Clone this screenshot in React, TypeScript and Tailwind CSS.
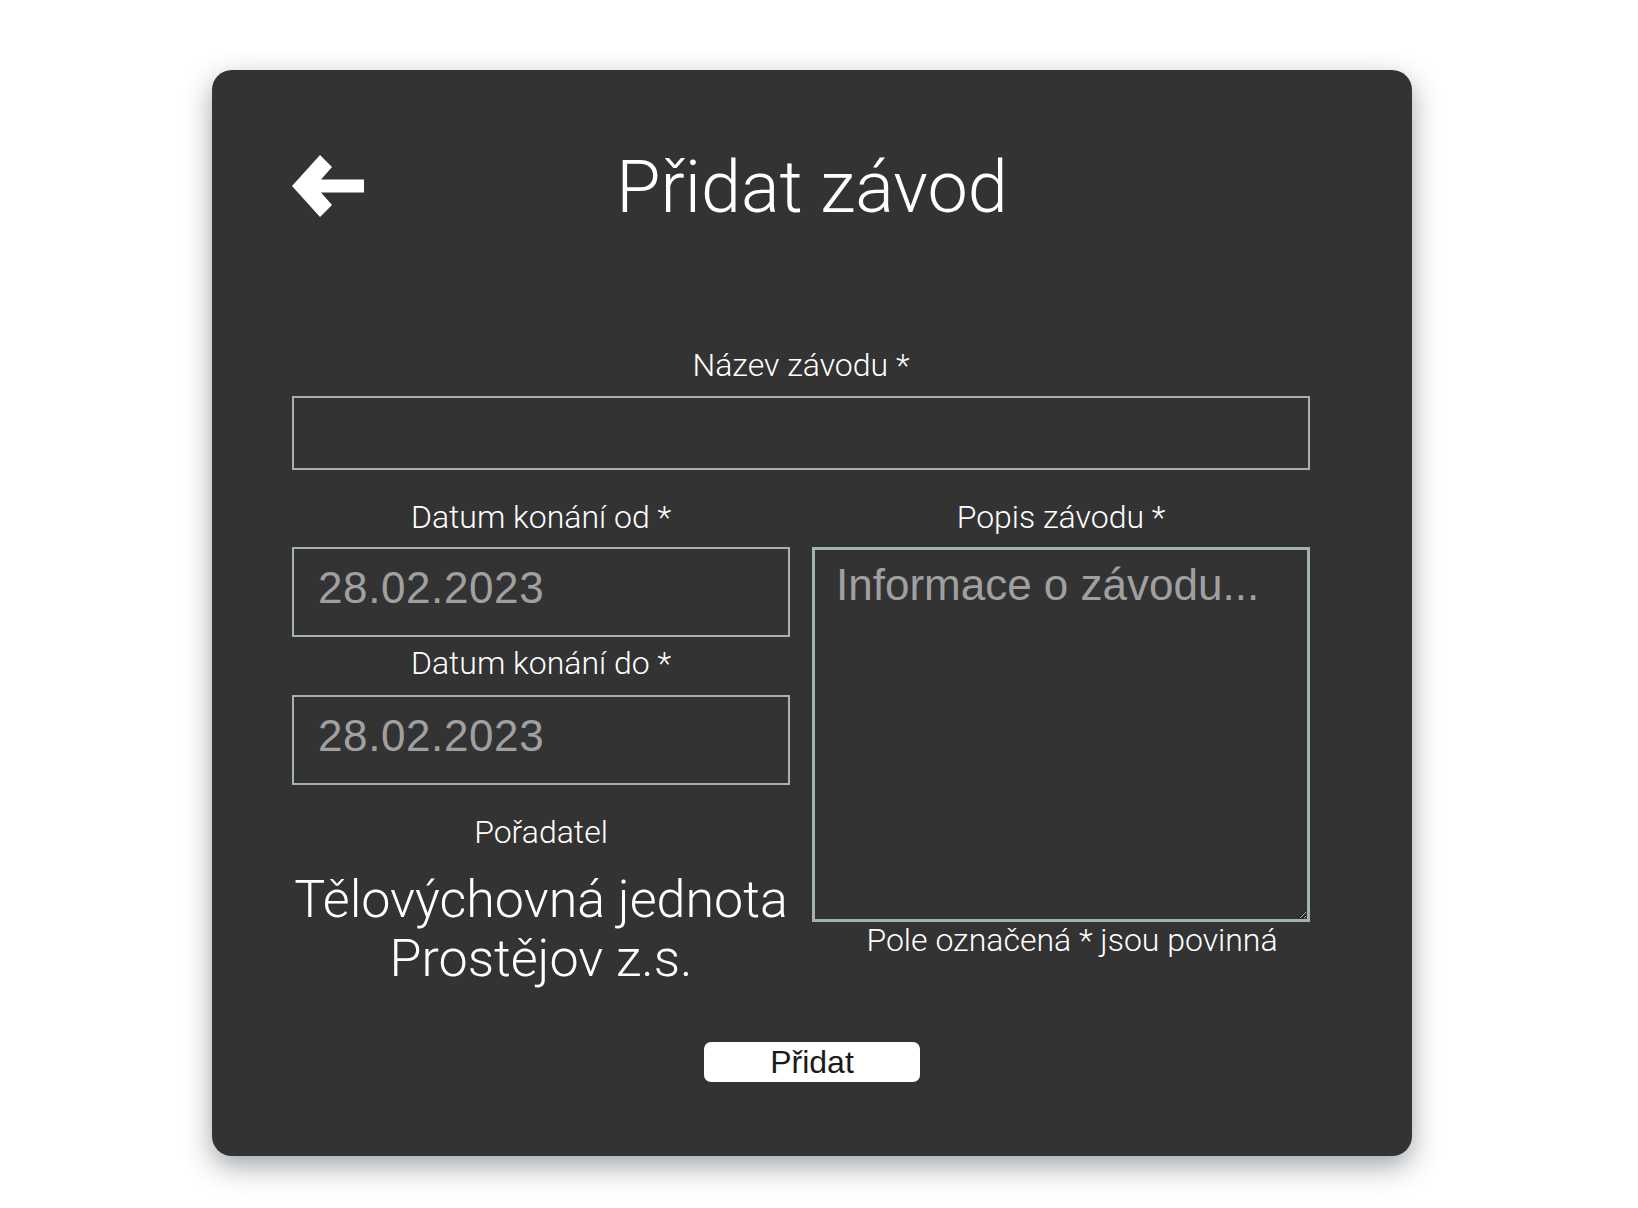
import React from "react";

function BackArrow() {
    return (
        <svg width="72" height="62" viewBox="0 0 72 62" className="block">
            <polygon
                points="0,31 28,0 40,12 29,24.5 72,24.5 72,37.5 29,37.5 40,50 28,62"
                fill="#ffffff"
            />
        </svg>
    );
}

function Label({ children }: { children: React.ReactNode }) {
    return (
        <div className="text-center text-white font-['Roboto',sans-serif] font-light text-[32px] leading-[37.5px]">
            {children}
        </div>
    );
}

export default function App() {
    return (
        <div className="min-h-screen bg-white pl-[212px] pt-[70px] pb-[53px]">
            <div className="w-[1200px] rounded-[20px] bg-[#333333] px-[80px] pt-[76px] pb-[74px] shadow-[0_10px_28px_rgba(45,55,65,0.45)]">
                {/* header */}
                <div className="grid grid-cols-[1fr_auto_1fr]">
                    <button type="button" className="self-start mt-[9px] w-fit">
                        <BackArrow />
                    </button>
                    <h1 className="text-white font-['Roboto',sans-serif] font-light text-[72px] leading-[84.4px]">
                        Přidat závod
                    </h1>
                    <div />
                </div>

                <form className="mt-[117px]">
                    <div className="w-[1018px]">
                        <Label>Název závodu *</Label>
                        <input
                            type="text"
                            className="mt-[11px] block h-[74px] w-full border-2 border-[#a3b2b1] bg-transparent px-[24px] text-[32px] text-white outline-none"
                        />
                    </div>

                    <div className="mt-[29px] flex gap-[22px]">
                        {/* left column */}
                        <div className="w-[498px]">
                            <Label>Datum konání od *</Label>
                            <input
                                type="text"
                                readOnly
                                defaultValue="28.02.2023"
                                className="mt-[11px] block h-[90px] w-full border-2 border-[#a3b2b1] bg-transparent pl-[24px] pb-[8px] font-['Liberation_Sans',Arial,sans-serif] text-[44px] tracking-[0.6px] text-[#a0a0a0] outline-none"
                            />
                            <div className="mt-[8px]">
                                <Label>Datum konání do *</Label>
                            </div>
                            <input
                                type="text"
                                readOnly
                                defaultValue="28.02.2023"
                                className="mt-[12px] block h-[90px] w-full border-2 border-[#a3b2b1] bg-transparent pl-[24px] pb-[8px] font-['Liberation_Sans',Arial,sans-serif] text-[44px] tracking-[0.6px] text-[#a0a0a0] outline-none"
                            />
                            <div className="mt-[29px]">
                                <Label>Pořadatel</Label>
                            </div>
                            <div className="mt-[19px] text-center text-white font-['Roboto',sans-serif] font-light text-[52px] leading-[59px]">
                                Tělovýchovná jednota Prostějov z.s.
                            </div>
                        </div>

                        {/* right column */}
                        <div className="w-[520px]">
                            <div className="w-[498px]">
                                <Label>Popis závodu *</Label>
                                <textarea
                                    placeholder="Informace o závodu..."
                                    className="mt-[11px] block h-[375px] w-full border-[3px] border-[#a3b2b1] bg-transparent px-[21px] py-[10px] font-['Liberation_Sans',Arial,sans-serif] text-[44px] leading-[50px] text-white placeholder:text-[#a0a0a0] outline-none"
                                />
                            </div>
                            <Label>Pole označená * jsou povinná</Label>
                        </div>
                    </div>

                    <div className="mt-[54px] flex justify-center">
                        <button
                            type="button"
                            className="flex h-[40px] w-[216px] items-center justify-center rounded-[7px] bg-white font-['Liberation_Sans',Arial,sans-serif] text-[32px] leading-none text-[#1a1a1a]"
                        >
                            Přidat
                        </button>
                    </div>
                </form>
            </div>
        </div>
    );
}
